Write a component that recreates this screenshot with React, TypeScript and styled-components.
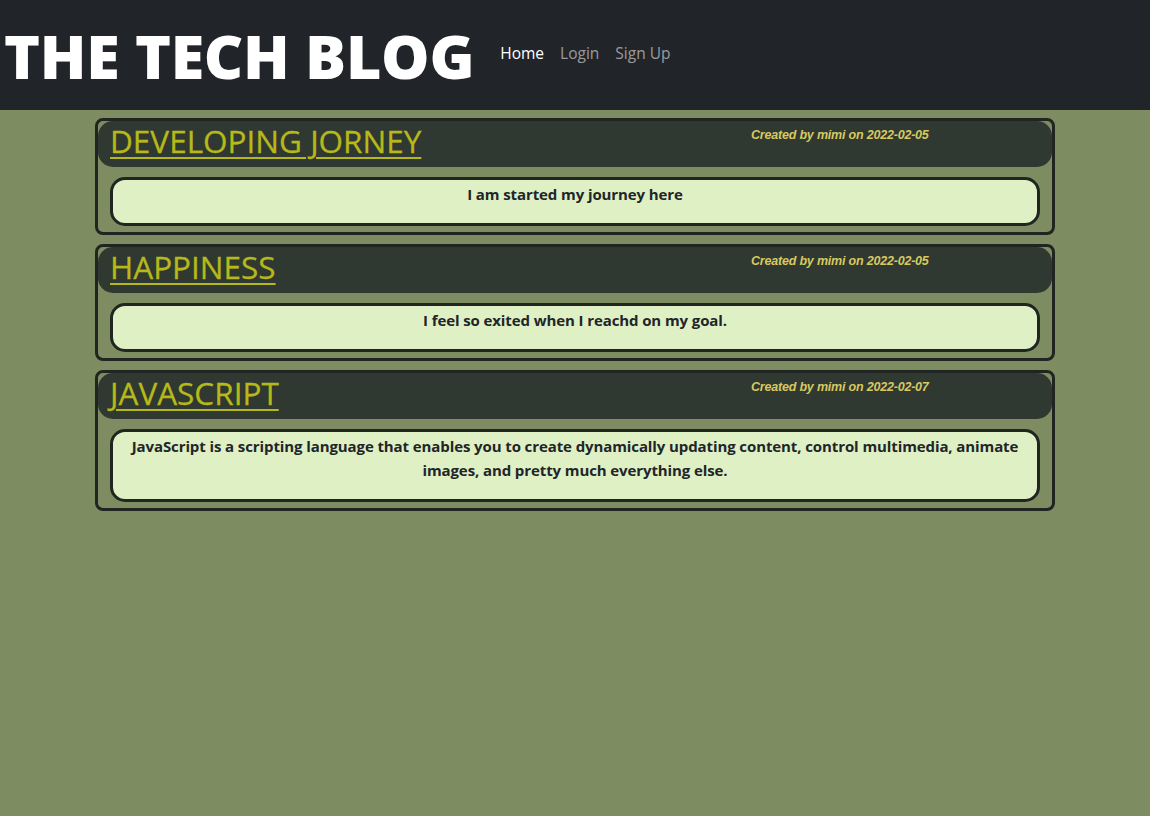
import React from 'react';
import styled, { createGlobalStyle } from 'styled-components';

const GlobalStyle = createGlobalStyle`
  html, body {
    margin: 0;
    padding: 0;
    background: #7e8c62;
    font-family: "Open Sans", "Noto Sans", sans-serif;
  }
`;

const Navbar = styled.header`
  display: flex;
  align-items: center;
  height: 110px;
  background: #212529;
  padding: 0 4px;
  box-sizing: border-box;
`;

const Brand = styled.h1`
  margin: 0 26px 0 0;
  font-family: "Open Sans", sans-serif;
  font-weight: 800;
  font-size: 61px;
  letter-spacing: -0.3px;
  color: #fff;
  line-height: 1;
`;

const NavLinks = styled.nav`
  display: flex;
  gap: 16px;
  margin-bottom: 5px;
`;

const NavLink = styled.a<{ $active?: boolean }>`
  font-size: 15.5px;
  color: ${p => (p.$active ? '#fff' : 'rgba(255, 255, 255, 0.55)')};
  text-decoration: none;
`;

const Main = styled.main`
  width: 960px;
  margin: 8px auto 0;
  display: flex;
  flex-direction: column;
  gap: 9px;
`;

const Card = styled.article`
  border: 3px solid #212521;
  border-radius: 8px;
  padding: 0 0 6px;
  box-sizing: border-box;
`;

const CardHeader = styled.div`
  display: grid;
  grid-template-columns: 641px 1fr;
  background: #2f3831;
  border-radius: 15px;
  height: 46px;
  padding-left: 12px;
`;

const Title = styled.a`
  font-size: 31.5px;
  line-height: 40px;
  color: #b7b81a;
  text-decoration: underline;
  text-decoration-thickness: 2px;
  text-underline-offset: 4px;
  white-space: nowrap;
  align-self: start;
  -webkit-text-stroke: 0.3px #b7b81a;
`;

const Meta = styled.span`
  font-family: "Liberation Sans", "DejaVu Sans", sans-serif;
  font-style: italic;
  font-weight: 700;
  font-size: 12.5px;
  color: #d8c860;
  padding-top: 7px;
  letter-spacing: -0.2px;
`;

const Content = styled.div`
  margin: 10px 12px 0;
  border: 3px solid #212521;
  border-radius: 15px;
  background: #dff0c4;
  padding: 2px 4px 0;
  text-align: center;
`;

const Text = styled.p`
  margin: 0 0 17px;
  font-size: 15px;
  font-weight: 700;
  line-height: 24px;
  letter-spacing: -0.1px;
  color: #212529;
`;

const posts = [
  {
    title: 'DEVELOPING JORNEY',
    date: '2022-02-05',
    body: 'I am started my journey here',
  },
  {
    title: 'HAPPINESS',
    date: '2022-02-05',
    body: 'I feel so exited when I reachd on my goal.',
  },
  {
    title: 'JAVASCRIPT',
    date: '2022-02-07',
    body:
      'JavaScript is a scripting language that enables you to create dynamically updating content, control multimedia, animate images, and pretty much everything else.',
  },
];

const App: React.FC = () => (
  <>
    <GlobalStyle />
    <Navbar>
      <Brand>THE TECH BLOG</Brand>
      <NavLinks>
        <NavLink $active href="#">Home</NavLink>
        <NavLink href="#">Login</NavLink>
        <NavLink href="#">Sign Up</NavLink>
      </NavLinks>
    </Navbar>
    <Main>
      {posts.map(post => (
        <Card key={post.title}>
          <CardHeader>
            <Title href="#">{post.title}</Title>
            <Meta>Created by mimi on {post.date}</Meta>
          </CardHeader>
          <Content>
            <Text>{post.body}</Text>
          </Content>
        </Card>
      ))}
    </Main>
  </>
);

export default App;
